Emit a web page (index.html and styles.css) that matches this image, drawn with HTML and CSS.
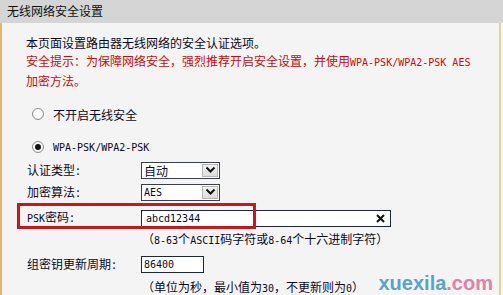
FILE: index.html
```html
<!DOCTYPE html>
<html>
<head>
<meta charset="utf-8">
<link rel="stylesheet" href="styles.css">
</head>
<body>
<div class="hdr">无线网络安全设置</div>
<div class="main">
  <p class="intro">本页面设置路由器无线网络的安全认证选项。</p>
  <p class="warn">安全提示：为保障网络安全，强烈推荐开启安全设置，并使用<span class="m">WPA-PSK/WPA2-PSK AES</span></p>
  <p class="warn">加密方法。</p>
  <div class="radio-row"><span class="radio"></span><span>不开启无线安全</span></div>
  <div class="radio-row r2"><span class="radio on"></span><span class="m">WPA-PSK/WPA2-PSK</span></div>
  <div class="form">
    <div class="lbl">认证类型:</div>
    <div class="ctl"><div class="sel"><span class="val">自动</span><span class="btn"><svg width="11" height="8" viewBox="0 0 11 8"><polyline points="1.5,1.5 5.5,5.5 9.5,1.5" fill="none" stroke="#111" stroke-width="2"/></svg></span></div></div>
    <div class="lbl">加密算法:</div>
    <div class="ctl"><div class="sel"><span class="val m">AES</span><span class="btn"><svg width="11" height="8" viewBox="0 0 11 8"><polyline points="1.5,1.5 5.5,5.5 9.5,1.5" fill="none" stroke="#111" stroke-width="2"/></svg></span></div></div>
    <div class="lbl psk"><span class="m">PSK</span>密码:<span class="hl"></span></div>
    <div class="ctl"><div class="inp wide"><span class="m">abcd12344</span><svg class="clr" width="9" height="9" viewBox="0 0 9 9"><path d="M1 1L8 8M8 1L1 8" stroke="#111" stroke-width="2"/></svg></div></div>
    <div class="hint">（<span class="m">8-63</span>个<span class="m">ASCII</span>码字符或<span class="m">8-64</span>个十六进制字符）</div>
    <div class="lbl">组密钥更新周期:</div>
    <div class="ctl"><div class="inp short"><span class="m">86400</span></div></div>
    <div class="hint">（单位为秒，最小值为<span class="m">30</span>，不更新则为<span class="m">0</span>）</div>
  </div>
  <div class="wm"><span class="wm1">xuexila</span><span class="wm2">.com</span></div>
</div>
</body>
</html>
```

FILE: styles.css
```css
html, body {
  margin: 0;
  padding: 0;
  background: #f9f9f7;
}
body {
  width: 503px;
  height: 295px;
  overflow: hidden;
  font-family: "Noto Sans Mono CJK SC", "Noto Sans CJK SC", sans-serif;
  font-size: 12px;
  color: #0a0a1e;
}
.m {
  font-family: "DejaVu Sans Mono", monospace;
  font-size: 10px;
}
.hdr {
  height: 23px;
  line-height: 22px;
  background: #d5d5d5;
  padding-left: 7px;
  font-size: 12px;
  color: #111;
}
.main {
  position: relative;
  height: 272px;
  background: #f4f4f4;
  border-left: 2px solid #e5b472;
  border-right: 2px solid #ead18e;
  padding: 11px 0 0 24px;
  box-sizing: border-box;
  width: 501px;
}
p {
  margin: 0;
  line-height: 18px;
}
.warn { color: #cc0a0a; }
.radio-row {
  display: flex;
  align-items: center;
  height: 18px;
  margin-top: 15px;
  gap: 9px;
}
.radio {
  width: 10px;
  height: 10px;
  margin-left: 6px;
  border: 1px solid #8c8c8c;
  border-radius: 50%;
  background: radial-gradient(circle at 50% 40%, #ffffff 40%, #e6e6e6 100%);
  position: relative;
}
.radio.on::after {
  content: "";
  position: absolute;
  left: 2px;
  top: 2px;
  width: 6px;
  height: 6px;
  border-radius: 50%;
  background: #111;
}
.form {
  margin-top: 3px;
  padding-left: 1px;
  display: grid;
  grid-template-columns: 114px auto;
  grid-template-rows: 22px 22px 30px 14px 34px 14px;
  align-items: center;
}
.lbl { position: relative; line-height: 16px; }
.ctl { display: flex; }
.sel {
  width: 79px;
  height: 17px;
  box-sizing: border-box;
  border: 1px solid #3a3f4a;
  background: #fff;
  display: flex;
  align-items: center;
  justify-content: space-between;
}
.sel .val { padding-left: 2px; line-height: 15px; }
.sel .btn {
  width: 16px;
  height: 13px;
  margin-right: 1px;
  box-sizing: border-box;
  border: 1px solid #b5b5b5;
  background: linear-gradient(#f2f2f2, #dcdcdc);
  display: flex;
  align-items: center;
  justify-content: center;
}
.inp {
  height: 17px;
  box-sizing: border-box;
  border: 1px solid #1d2733;
  background: #fff;
  display: flex;
  align-items: center;
  padding-left: 4px;
}
.inp.wide { width: 250px; justify-content: space-between; padding-right: 5px; }
.inp.short { width: 63px; padding-left: 2px; }
.hint {
  grid-column: 2;
  line-height: 14px;
  padding-left: 1px;
}
.hl {
  position: absolute;
  left: -10px;
  top: -6px;
  width: 239px;
  height: 26px;
  box-sizing: border-box;
  border: 3px solid #c8171c;
}
.wm {
  position: absolute;
  right: 6px;
  bottom: 1px;
  font-family: "Liberation Sans", Arial, sans-serif;
  font-weight: bold;
  font-size: 20px;
  line-height: 22px;
}
.wm1 { color: #5aa2cc; }
.wm2 { color: #e27fac; }
```
